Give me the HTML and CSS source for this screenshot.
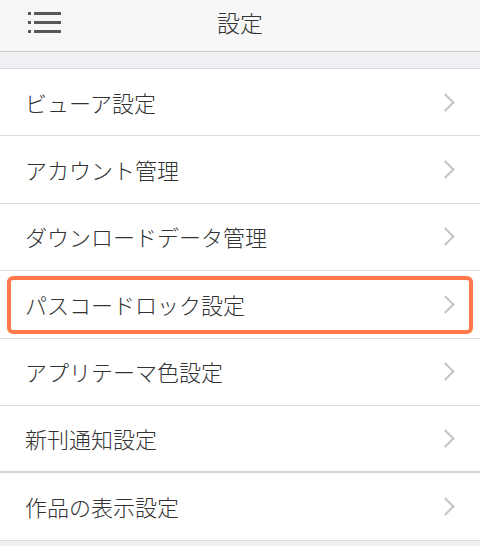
FILE: index.html
```html
<!DOCTYPE html>
<html lang="ja">
<head>
<meta charset="utf-8">
<title>設定</title>
<link rel="stylesheet" href="styles.css">
</head>
<body>
<header class="topbar">
  <span class="menu">
    <svg width="34" height="22" viewBox="0 0 34 22">
      <g fill="#585858">
        <rect x="0" y="0" width="3" height="3"/>
        <rect x="6" y="0" width="27" height="3"/>
        <rect x="0" y="9" width="3" height="3"/>
        <rect x="6" y="9" width="27" height="3"/>
        <rect x="0" y="18" width="3" height="3"/>
        <rect x="6" y="18" width="27" height="3"/>
      </g>
    </svg>
  </span>
  <h1 class="title">設定</h1>
</header>
<div class="band"></div>
<ul class="list">
  <li class="row"><span class="label">ビューア設定</span><span class="chev"></span></li>
  <li class="row"><span class="label">アカウント管理</span><span class="chev"></span></li>
  <li class="row"><span class="label">ダウンロードデータ管理</span><span class="chev"></span></li>
  <li class="row row-hl"><span class="label">パスコードロック設定</span><span class="chev"></span></li>
  <li class="row"><span class="label">アプリテーマ色設定</span><span class="chev"></span></li>
  <li class="row row-sect"><span class="label">新刊通知設定</span><span class="chev"></span></li>
  <li class="row"><span class="label">作品の表示設定</span><span class="chev"></span></li>
</ul>
</body>
</html>
```
FILE: styles.css
```css
html, body {
  margin: 0;
  padding: 0;
  background: #efeff4;
  font-family: "Noto Sans CJK JP", "Noto Sans", sans-serif;
  color: #333;
}
.topbar {
  height: 51px;
  background: #f7f7f7;
  border-bottom: 1px solid #c9c9c9;
  display: flex;
  align-items: center;
  justify-content: center;
  position: relative;
}
.menu {
  position: absolute;
  left: 28px;
  top: 12px;
  display: flex;
}
.title {
  margin: 0;
  font-size: 23px;
  font-weight: 300;
  color: #333;
  line-height: 1;
  margin-top: -6px;
}
.band {
  height: 16px;
  background: #efeff4;
  border-bottom: 1px solid #d8d8dc;
}
.list {
  list-style: none;
  margin: 0;
  padding: 0;
  background: #fff;
}
.row {
  box-sizing: border-box;
  height: 67.4px;
  border-bottom: 1px solid #dcdcdc;
  display: flex;
  align-items: center;
  justify-content: space-between;
  padding: 0 24px 0 25px;
  position: relative;
}
.row-sect {
  border-bottom: 2px solid #d6d6d6;
}
.label {
  font-size: 22px;
  font-weight: 300;
  line-height: 1;
  color: #333;
  margin-top: -1px;
}
.chev {
  width: 11px;
  height: 11px;
  border-top: 2px solid #c4c4c6;
  border-right: 2px solid #c4c4c6;
  transform: rotate(45deg);
  margin-right: 4px;
}
.row-hl::after {
  content: "";
  position: absolute;
  left: 7px;
  right: 7px;
  top: 5px;
  bottom: 4px;
  border: 4px solid #ff7a48;
  border-radius: 6px;
}
```
